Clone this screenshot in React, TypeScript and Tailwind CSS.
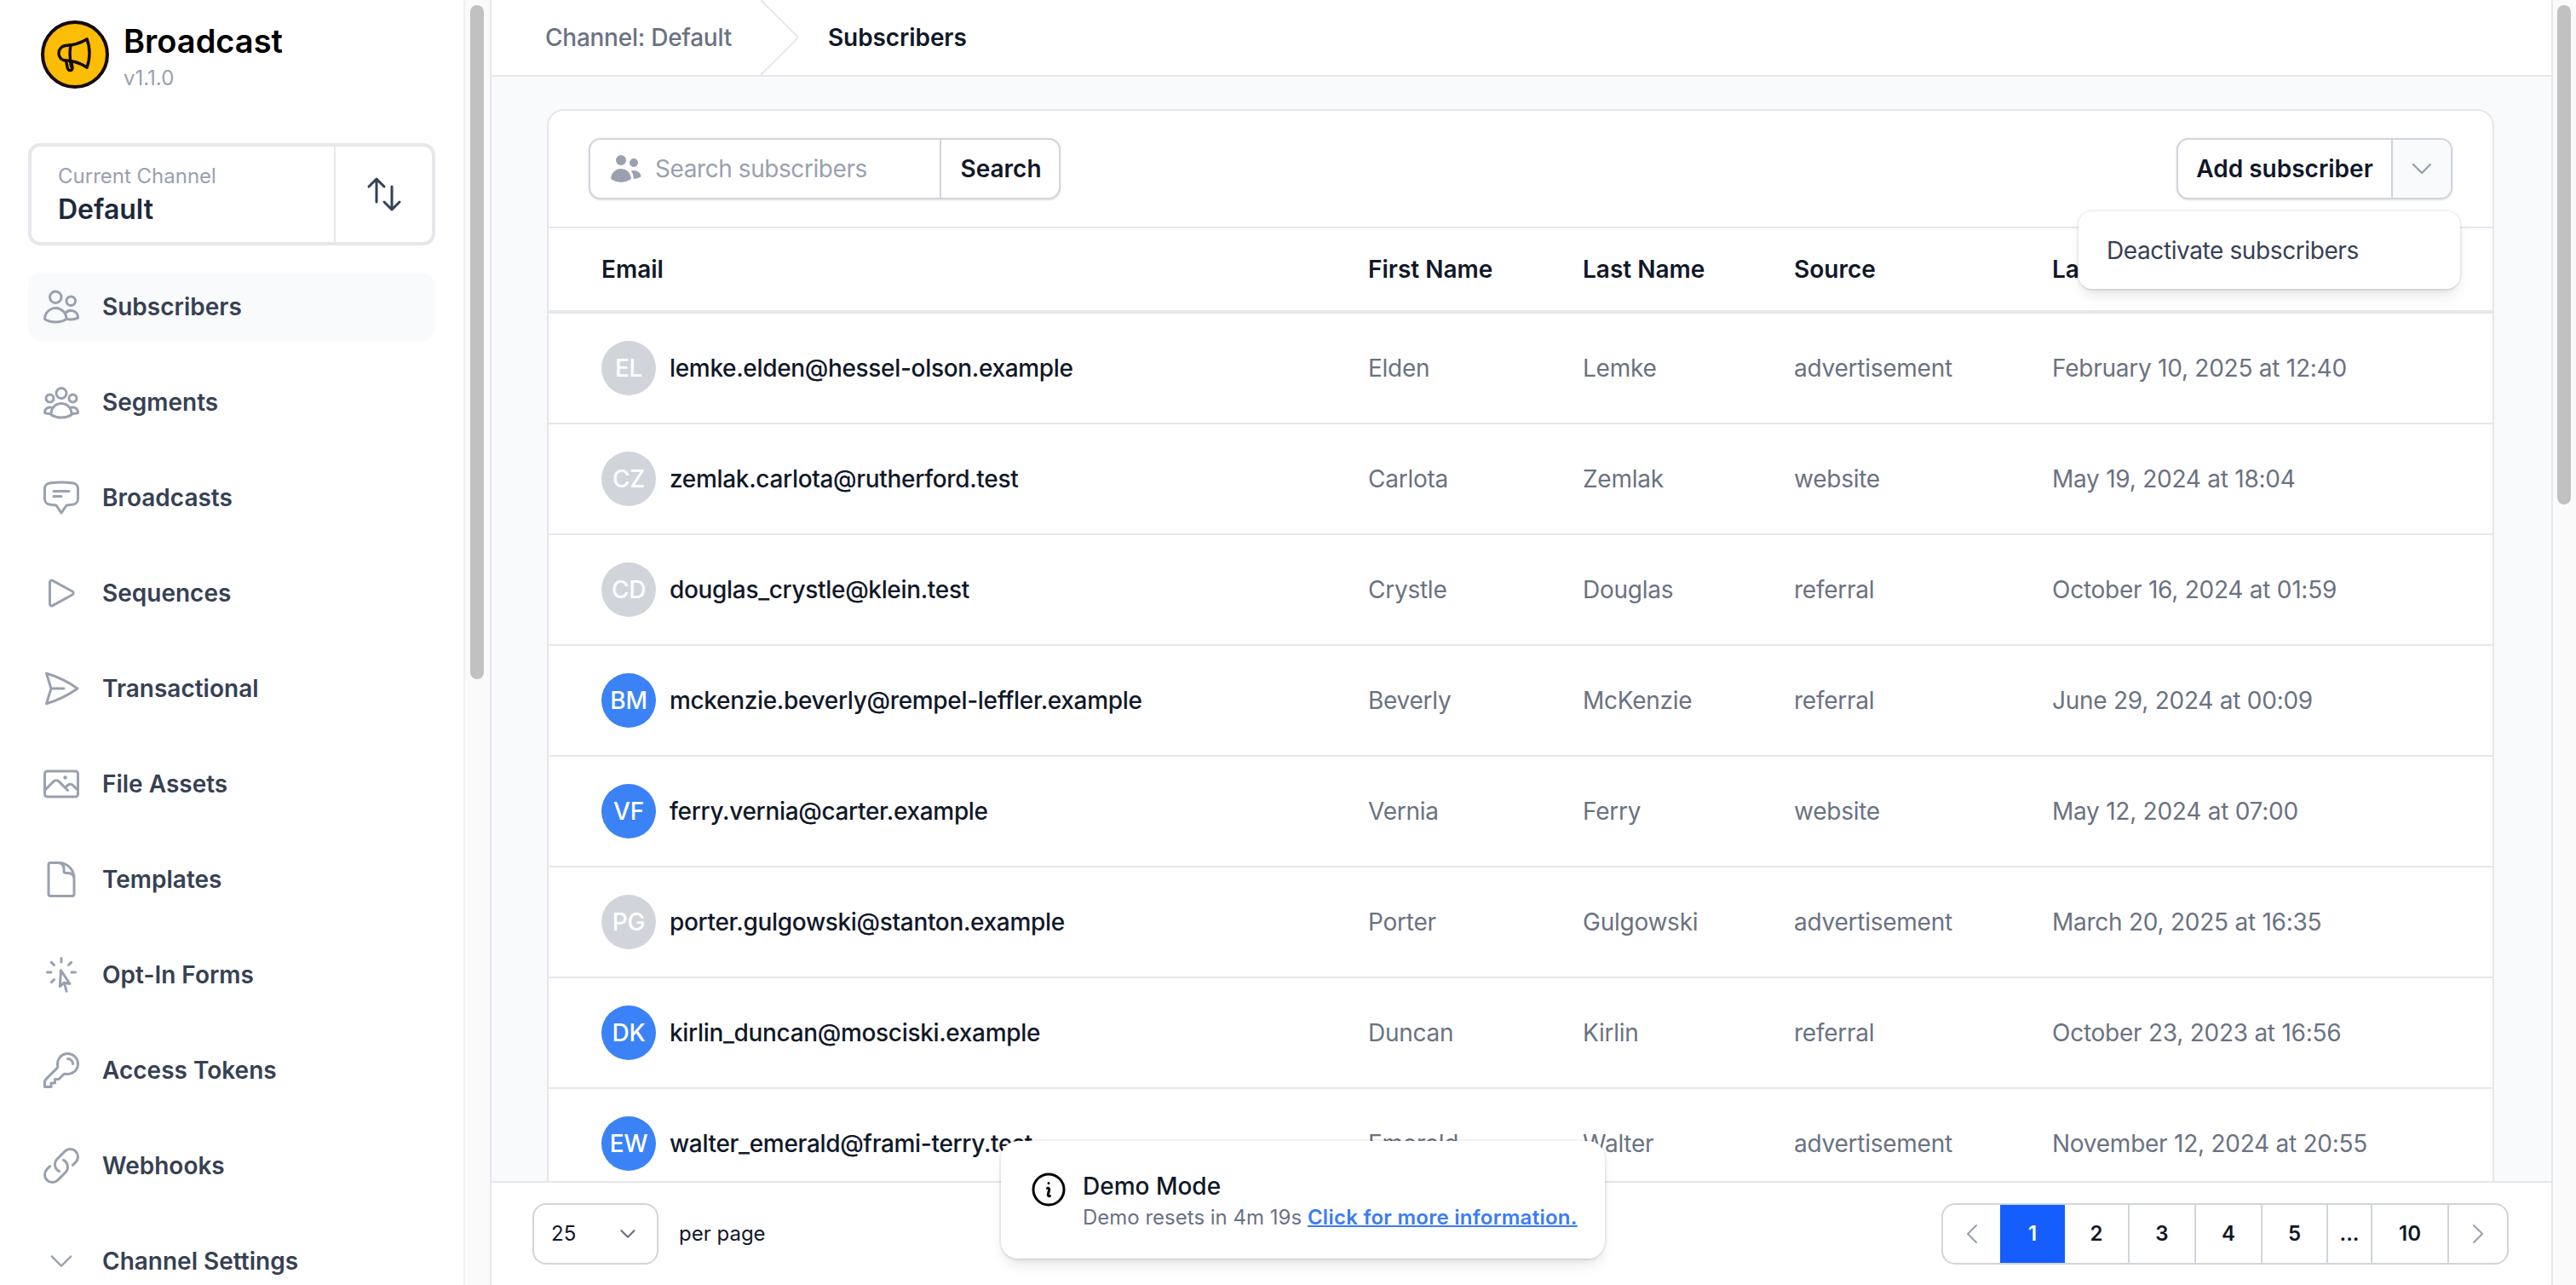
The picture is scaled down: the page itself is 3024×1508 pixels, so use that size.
import React from "react";

const P: Record<string, string> = {
  users: "M15 19.128a9.38 9.38 0 0 0 2.625.372 9.337 9.337 0 0 0 4.121-.952 4.125 4.125 0 0 0-7.533-2.493M15 19.128v-.003c0-1.113-.285-2.16-.786-3.07M15 19.128v.106A12.318 12.318 0 0 1 8.624 21c-2.331 0-4.512-.645-6.374-1.766l-.001-.109a6.375 6.375 0 0 1 11.964-3.07M12 6.375a3.375 3.375 0 1 1-6.75 0 3.375 3.375 0 0 1 6.75 0Zm8.25 2.25a2.625 2.625 0 1 1-5.25 0 2.625 2.625 0 0 1 5.25 0Z",
  group: "M18 18.72a9.094 9.094 0 0 0 3.741-.479 3 3 0 0 0-4.682-2.72m.94 3.198.001.031c0 .225-.012.447-.037.666A11.944 11.944 0 0 1 12 21c-2.17 0-4.207-.576-5.963-1.584A6.062 6.062 0 0 1 6 18.719m12 0a5.971 5.971 0 0 0-.941-3.197m0 0A5.995 5.995 0 0 0 12 12.75a5.995 5.995 0 0 0-5.058 2.772m0 0a3 3 0 0 0-4.681 2.72 8.986 8.986 0 0 0 3.74.477m.94-3.197a5.971 5.971 0 0 0-.94 3.197M15 6.75a3 3 0 1 1-6 0 3 3 0 0 1 6 0Zm6 3a2.25 2.25 0 1 1-4.5 0 2.25 2.25 0 0 1 4.5 0Zm-13.5 0a2.25 2.25 0 1 1-4.5 0 2.25 2.25 0 0 1 4.5 0Z",
  chat: "M7.5 8.25h9m-9 3H12m-9.75 1.51c0 1.6 1.123 2.994 2.707 3.227 1.129.166 2.27.293 3.423.379.35.026.67.21.865.501L12 21l2.755-4.133a1.14 1.14 0 0 1 .865-.501 48.172 48.172 0 0 0 3.423-.379c1.584-.233 2.707-1.626 2.707-3.228V6.741c0-1.602-1.123-2.995-2.707-3.228A48.394 48.394 0 0 0 12 3c-2.392 0-4.744.175-7.043.513C3.373 3.746 2.25 5.14 2.25 6.741v6.018Z",
  play: "M5.25 5.653c0-.856.917-1.398 1.667-.986l11.54 6.347a1.125 1.125 0 0 1 0 1.972l-11.54 6.347a1.125 1.125 0 0 1-1.667-.986V5.653Z",
  plane: "M6 12 3.269 3.125A59.769 59.769 0 0 1 21.485 12 59.768 59.768 0 0 1 3.27 20.875L5.999 12Zm0 0h7.5",
  photo: "m2.25 15.75 5.159-5.159a2.25 2.25 0 0 1 3.182 0l5.159 5.159m-1.5-1.5 1.409-1.409a2.25 2.25 0 0 1 3.182 0l2.909 2.909m-18 3.75h16.5a1.5 1.5 0 0 0 1.5-1.5V6a1.5 1.5 0 0 0-1.5-1.5H3.75A1.5 1.5 0 0 0 2.25 6v12a1.5 1.5 0 0 0 1.5 1.5Zm10.5-11.25h.008v.008h-.008V8.25Zm.375 0a.375.375 0 1 1-.75 0 .375.375 0 0 1 .75 0Z",
  doc: "M19.5 14.25v-2.625a3.375 3.375 0 0 0-3.375-3.375h-1.5A1.125 1.125 0 0 1 13.5 7.125v-1.5a3.375 3.375 0 0 0-3.375-3.375H8.25m2.25 0H5.625c-.621 0-1.125.504-1.125 1.125v17.25c0 .621.504 1.125 1.125 1.125h12.75c.621 0 1.125-.504 1.125-1.125V11.25a9 9 0 0 0-9-9Z",
  rays: "M15.042 21.672 13.684 16.6m0 0-2.51 2.225.569-9.47 5.227 7.917-3.286-.672ZM12 2.25V4.5m5.834.166-1.591 1.591M20.25 10.5H18M7.757 14.743l-1.59 1.59M6 10.5H3.75m4.007-4.243-1.59-1.59",
  key: "M15.75 5.25a3 3 0 0 1 3 3m3 0a6 6 0 0 1-7.029 5.912c-.563-.097-1.159.026-1.563.43L10.5 17.25H8.25v2.25H6v2.25H2.25v-2.818c0-.597.237-1.17.659-1.591l6.499-6.499c.404-.404.527-1 .43-1.563A6 6 0 1 1 21.75 8.25Z",
  link: "M13.19 8.688a4.5 4.5 0 0 1 1.242 7.244l-4.5 4.5a4.5 4.5 0 0 1-6.364-6.364l1.757-1.757m13.35-.622 1.757-1.757a4.5 4.5 0 0 0-6.364-6.364l-4.5 4.5a4.5 4.5 0 0 0 1.242 7.244",
  down: "m19.5 8.25-7.5 7.5-7.5-7.5",
  left: "M15.75 19.5 8.25 12l7.5-7.5",
  right: "m8.25 4.5 7.5 7.5-7.5 7.5",
  swap: "M3 7.5 7.5 3m0 0L12 7.5M7.5 3v13.5m13.5 0L16.5 21m0 0L12 16.5m4.5 4.5V7.5",
  info: "m11.25 11.25.041-.02a.75.75 0 0 1 1.063.852l-.708 2.836a.75.75 0 0 0 1.063.853l.041-.021M21 12a9 9 0 1 1-18 0 9 9 0 0 1 18 0Zm-9-3.75h.008v.008H12V8.25Z",
};

function Icon({ name, className, sw = 1.5 }: { name: string; className: string; sw?: number }) {
  return (
    <svg viewBox="0 0 24 24" fill="none" stroke="currentColor" strokeWidth={sw} strokeLinecap="round" strokeLinejoin="round" className={className}>
      <path d={P[name]} />
    </svg>
  );
}

const nav = [
  ["users", "Subscribers"],
  ["group", "Segments"],
  ["chat", "Broadcasts"],
  ["play", "Sequences"],
  ["plane", "Transactional"],
  ["photo", "File Assets"],
  ["doc", "Templates"],
  ["rays", "Opt-In Forms"],
  ["key", "Access Tokens"],
  ["link", "Webhooks"],
];

const rows = [
  ["EL", false, "lemke.elden@hessel-olson.example", "Elden", "Lemke", "advertisement", "February 10, 2025 at 12:40"],
  ["CZ", false, "zemlak.carlota@rutherford.test", "Carlota", "Zemlak", "website", "May 19, 2024 at 18:04"],
  ["CD", false, "douglas_crystle@klein.test", "Crystle", "Douglas", "referral", "October 16, 2024 at 01:59"],
  ["BM", true, "mckenzie.beverly@rempel-leffler.example", "Beverly", "McKenzie", "referral", "June 29, 2024 at 00:09"],
  ["VF", true, "ferry.vernia@carter.example", "Vernia", "Ferry", "website", "May 12, 2024 at 07:00"],
  ["PG", false, "porter.gulgowski@stanton.example", "Porter", "Gulgowski", "advertisement", "March 20, 2025 at 16:35"],
  ["DK", true, "kirlin_duncan@mosciski.example", "Duncan", "Kirlin", "referral", "October 23, 2023 at 16:56"],
  ["EW", true, "walter_emerald@frami-terry.test", "Emerald", "Walter", "advertisement", "November 12, 2024 at 20:55"],
] as const;

const grid = "grid grid-cols-[900px_252px_248px_303px_1fr] items-center pl-[62px]";

const pages = [
  ["1", "w-[76px] bg-[#155dfc] border-[#155dfc] text-white"],
  ["2", "w-[76px] border-r-2 bg-white text-gray-900"],
  ["3", "w-[78px] border-r-2 bg-white text-gray-900"],
  ["4", "w-[78px] border-r-2 bg-white text-gray-900"],
  ["5", "w-[77px] border-r-2 bg-white text-gray-900"],
  ["...", "w-[52px] border-r-2 bg-white text-gray-900"],
  ["10", "w-[90px] border-r-2 bg-white text-gray-900"],
];

function Logo() {
  return (
    <svg viewBox="0 0 80 80" className="h-[80px] w-[80px] shrink-0">
      <circle cx="40" cy="40" r="38" fill="#fbbc04" stroke="#140a08" strokeWidth="4" />
      <g fill="none" stroke="#140a08" strokeWidth="3.4" strokeLinecap="round" strokeLinejoin="round">
        <path d="M54 22C46 27 38 29 29 29.5C24 30 21 34 21 38.5C21 43 24 47 29 47C38 47 46 50 54 55" />
        <path d="M54 22C58 32 58 45 54 55" />
        <path d="M35 29.5C33.5 36 33.5 42 35.5 54" />
        <path d="M29.5 47L31 55C32 60 37.5 59.5 37 55L36 49.5" />
      </g>
    </svg>
  );
}

export default function App() {
  return (
    <div className="relative flex h-[1508px] w-[3024px] overflow-hidden bg-white [font-family:Inter,sans-serif]">
      {/* Sidebar */}
      <aside className="flex w-[544px] shrink-0 flex-col overflow-hidden bg-white">
        <div className="flex h-[80px] items-start gap-[17px] pl-[48px] mt-[24px]">
          <Logo />
          <div className="flex flex-col">
            <span className="mt-[2px] text-[38px] leading-[44px] font-semibold text-black">Broadcast</span>
            <span className="mt-[6px] text-[24px] leading-[32px] text-gray-400">v1.1.0</span>
          </div>
        </div>

        <div className="mx-[33px] mt-[64px] flex h-[120px] w-[478px] shrink-0 rounded-[14px] border-4 border-[#e5e7eb]">
          <div className="flex w-[357px] flex-col justify-center border-r-2 border-[#e5e7eb] pl-[31px]">
            <span className="text-[24px] leading-[32px] text-gray-400">Current Channel</span>
            <span className="mt-[3px] text-[32px] leading-[40px] font-semibold text-[#1e293b]">Default</span>
          </div>
          <div className="flex flex-1 items-center justify-center">
            <Icon name="swap" className="h-[48px] w-[48px] text-[#334155]" />
          </div>
        </div>

        <nav className="mx-[33px] mt-[32px] flex flex-col gap-[32px]">
          {nav.map(([icon, label], i) => (
            <div key={label} className={`flex h-[80px] shrink-0 items-center gap-[24px] rounded-[16px] pl-[15px] ${i === 0 ? "bg-[#f9fafb]" : ""}`}>
              <Icon name={icon} className="h-[48px] w-[48px] shrink-0 text-gray-400" />
              <span className="text-[28px] font-semibold text-gray-700">{label}</span>
            </div>
          ))}
          <div className="flex h-[80px] shrink-0 items-center gap-[24px] pl-[15px]">
            <span className="flex w-[48px] justify-center">
              <Icon name="down" className="h-[36px] w-[36px] text-gray-400" />
            </span>
            <span className="text-[28px] font-semibold text-gray-700">Channel Settings</span>
          </div>
        </nav>
      </aside>

      {/* Sidebar scrollbar */}
      <div className="w-[31px] shrink-0 border-l-2 border-[#f0f0f0] bg-[#fafafa] pl-[6px] pt-[6px]">
        <div className="h-[791px] w-[16px] rounded-full bg-[#c1c1c1]" />
      </div>

      {/* Main */}
      <main className="flex w-[2422px] shrink-0 flex-col overflow-hidden border-x-2 border-[#e5e7eb] bg-white">
        <header className="relative flex h-[90px] shrink-0 items-center border-b-2 border-[#e5e7eb] bg-white">
          <span className="ml-[63px] text-[28px] font-medium tracking-[-0.25px] text-gray-500">Channel: Default</span>
          <svg viewBox="0 0 44 88" fill="none" className="absolute left-[316px] top-0 h-[88px] w-[44px] text-[#e5e7eb]">
            <path d="M0 0L44 44L0 88" stroke="currentColor" strokeWidth="2" />
          </svg>
          <span className="absolute left-[395px] text-[28px] font-semibold tracking-[-0.1px] text-gray-900">Subscribers</span>
        </header>

        <div className="min-h-0 flex-1 overflow-hidden bg-[#f9fafb] pl-[65px] pr-[67px] pt-[38px]">
          <section className="relative rounded-t-[20px] border-2 border-[#e5e7eb] bg-white">
            <div className="flex h-[138px] items-center justify-between border-b-2 border-[#e5e7eb] px-[47px]">
              <div className="flex h-[72px] w-[554px] items-stretch rounded-[14px] border-2 border-[#d1d5db] bg-white shadow-sm">
                <div className="flex flex-1 items-center gap-[14px] pl-[22px]">
                  <svg viewBox="0 0 20 20" fill="currentColor" className="h-[40px] w-[40px] text-gray-400">
                    <path d="M7 8a3 3 0 1 0 0-6 3 3 0 0 0 0 6ZM14.5 9a2.5 2.5 0 1 0 0-5 2.5 2.5 0 0 0 0 5ZM1.615 16.428a1.224 1.224 0 0 1-.569-1.175 6.002 6.002 0 0 1 11.908 0c.058.467-.172.92-.57 1.174A9.953 9.953 0 0 1 7 18a9.953 9.953 0 0 1-5.385-1.572ZM14.5 16h-.106c.07-.297.088-.611.048-.933a7.47 7.47 0 0 0-1.588-3.755 4.502 4.502 0 0 1 5.874 2.636.818.818 0 0 1-.36.98A7.465 7.465 0 0 1 14.5 16Z" />
                  </svg>
                  <span className="text-[28px] tracking-[-0.43px] text-gray-400">Search subscribers</span>
                </div>
                <div className="flex w-[140px] items-center justify-center border-l-2 border-[#d1d5db] pl-[2px] text-[28px] font-semibold text-gray-900">Search</div>
              </div>
              <div className="flex h-[72px] w-[324px] items-stretch overflow-hidden rounded-[14px] border-2 border-[#d1d5db] bg-white shadow-sm">
                <div className="flex flex-1 items-center justify-center text-[28px] font-semibold text-gray-900">Add subscriber</div>
                <div className="flex w-[70px] items-center justify-center border-l-2 border-[#d1d5db] bg-[#f9fafb]">
                  <Icon name="down" className="h-[32px] w-[32px] text-gray-400" sw={1.8} />
                </div>
              </div>
            </div>

            <div className={`${grid} h-[100px] border-b-4 border-[#e5e7eb] text-[28px] font-semibold text-gray-900`}>
              <span>Email</span>
              <span>First Name</span>
              <span>Last Name</span>
              <span>Source</span>
              <span>Last Activity</span>
            </div>

            {rows.map(([ini, active, email, first, last, source, date]) => (
              <div key={email} className={`${grid} h-[130px] border-b-2 border-[#e5e7eb] text-[28px] tracking-[-0.25px] text-gray-500`}>
                <div className="flex items-center gap-[16px]">
                  <span className={`flex h-[64px] w-[64px] items-center justify-center rounded-full font-medium text-white ${active ? "bg-[#3b82f6]" : "bg-[#d1d5db]"}`}>{ini}</span>
                  <span className="font-medium tracking-[-0.33px] text-gray-900">{email}</span>
                </div>
                <span>{first}</span>
                <span>{last}</span>
                <span>{source}</span>
                <span>{date}</span>
              </div>
            ))}

            <div className="absolute left-[1796px] top-[118px] z-10 flex h-[91px] w-[448px] items-center rounded-[16px] bg-white pl-[33px] text-[28px] tracking-[-0.4px] text-gray-700 shadow-lg ring-2 ring-black/5">
              Deactivate subscribers
            </div>
          </section>
        </div>

        <footer className="flex h-[122px] shrink-0 items-center justify-between border-t-2 border-[#e5e7eb] bg-white pl-[48px] pr-[50px]">
          <div className="flex items-center gap-[24px]">
            <div className="flex h-[72px] w-[148px] items-center justify-between rounded-[16px] border-2 border-[#d1d5db] bg-white pl-[20px] pr-[22px] text-[24px] text-gray-900">
              <span>25</span>
              <Icon name="down" className="h-[24px] w-[24px] text-gray-500" sw={2.2} />
            </div>
            <span className="text-[24px] text-gray-900">per page</span>
          </div>
          <div className="flex h-[72px] items-stretch text-[24px] font-semibold">
            <div className="flex w-[69px] items-center justify-center rounded-l-[16px] border-y-2 border-l-2 border-[#d1d5db] bg-white">
              <Icon name="left" className="h-[32px] w-[32px] text-gray-400" />
            </div>
            {pages.map(([label, cls]) => (
              <div key={label} className={`flex items-center justify-center border-y-2 border-[#d1d5db] ${cls}`}>{label}</div>
            ))}
            <div className="flex w-[70px] items-center justify-center rounded-r-[16px] border-y-2 border-r-2 border-[#d1d5db] bg-white">
              <Icon name="right" className="h-[32px] w-[32px] text-gray-400" />
            </div>
          </div>
        </footer>
      </main>

      {/* Page scrollbar */}
      <div className="flex-1 bg-[#fafafa] pl-[5px] pt-[6px]">
        <div className="h-[586px] w-[16px] rounded-full bg-[#c1c1c1]" />
      </div>

      {/* Demo toast */}
      <div className="absolute left-[1175px] top-[1339px] z-20 flex h-[138px] w-[709px] items-start gap-[16px] rounded-[20px] bg-white pl-[32px] pt-[33px] shadow-lg ring-2 ring-black/5">
        <Icon name="info" className="h-[48px] w-[48px] shrink-0 text-black" />
        <div className="flex flex-col">
          <span className="text-[28px] leading-[40px] font-medium text-gray-900">Demo Mode</span>
          <span className="mt-[1px] text-[24px] leading-[32px] text-gray-500">
            Demo resets in 4m 19s{" "}
            <span className="font-semibold tracking-[0.27px] text-[#3b7cf6] underline decoration-2">Click for more information.</span>
          </span>
        </div>
      </div>
    </div>
  );
}
